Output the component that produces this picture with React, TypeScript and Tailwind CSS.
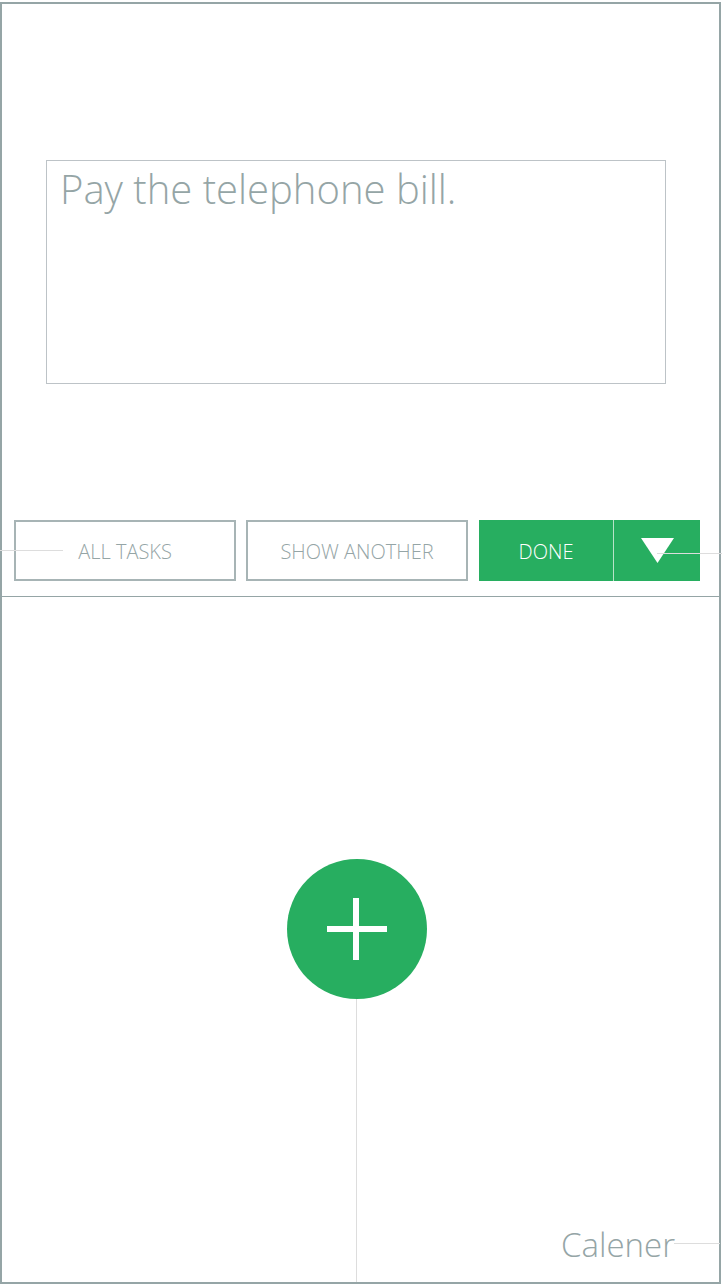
import React from "react";

const font = { fontFamily: '"Open Sans", "Liberation Sans", sans-serif' };

export default function App() {
  return (
    <div className="relative w-[722px] h-[1285px] bg-white overflow-hidden" style={font}>
      <div className="mt-[2px] w-[721px] h-[1282px] border-2 border-[#95a5a6] flex flex-col">
        {/* task card */}
        <div className="mt-[156px] ml-[44px] w-[620px] h-[224px] border border-[#bdc3c7] pl-[13px] pt-[2px]">
          <p className="text-[40px] leading-[52px] font-light text-[#95a5a6]">Pay the telephone bill.</p>
        </div>

        {/* actions row */}
        <div className="mt-[136px] ml-[12px] flex h-[61px]">
          <button className="w-[222px] h-full border-2 border-[#a7b4b5] pt-[3px] text-[20px] font-light text-[#95a5a6] uppercase flex items-center justify-center">
            All Tasks
          </button>
          <button className="ml-[10px] w-[222px] h-full border-2 border-[#a7b4b5] pt-[3px] text-[20px] font-light text-[#95a5a6] uppercase flex items-center justify-center">
            Show Another
          </button>
          <div className="ml-[11px] flex h-full">
            <button className="w-[134px] h-full bg-[#27ae60] pt-[3px] text-[20px] font-light text-white uppercase flex items-center justify-center">
              Done
            </button>
            <div className="w-[1px] h-full bg-[#b8e3c8]" />
            <button className="w-[86px] h-full bg-[#27ae60] flex items-center justify-center">
              <svg width="33" height="25" viewBox="0 0 33 25">
                <polygon points="0,0 33,0 16.5,25" fill="#ffffff" />
              </svg>
            </button>
          </div>
        </div>

        <div className="mt-[15px] h-[1px] w-[717px] bg-[#95a5a6]" />

        {/* add area */}
        <div className="relative flex-1 flex flex-col">
          <div className="mt-[262px] ml-[285px] w-[140px] h-[140px] rounded-full bg-[#27ae60] flex items-center justify-center">
            <svg width="60" height="62" viewBox="0 0 60 62">
              <rect x="26" y="0" width="6" height="62" fill="#ffffff" />
              <rect x="0" y="28" width="60" height="6" fill="#ffffff" />
            </svg>
          </div>
          <div className="ml-[354px] w-[1px] flex-1 bg-[#dddddd]" />
          <span className="absolute right-[44px] bottom-[21px] text-[33px] font-light text-[#95a5a6] leading-none">
            Calener
          </span>
        </div>
      </div>

      {/* connector lines */}
      <div className="absolute left-0 top-[550px] w-[63px] h-[1px] bg-[#dddddd]" />
      <div className="absolute left-[657px] top-[553px] w-[65px] h-[1px] bg-[#dddddd]" />
      <div className="absolute left-[674px] top-[1243px] w-[46px] h-[1px] bg-[#dddddd]" />
    </div>
  );
}
